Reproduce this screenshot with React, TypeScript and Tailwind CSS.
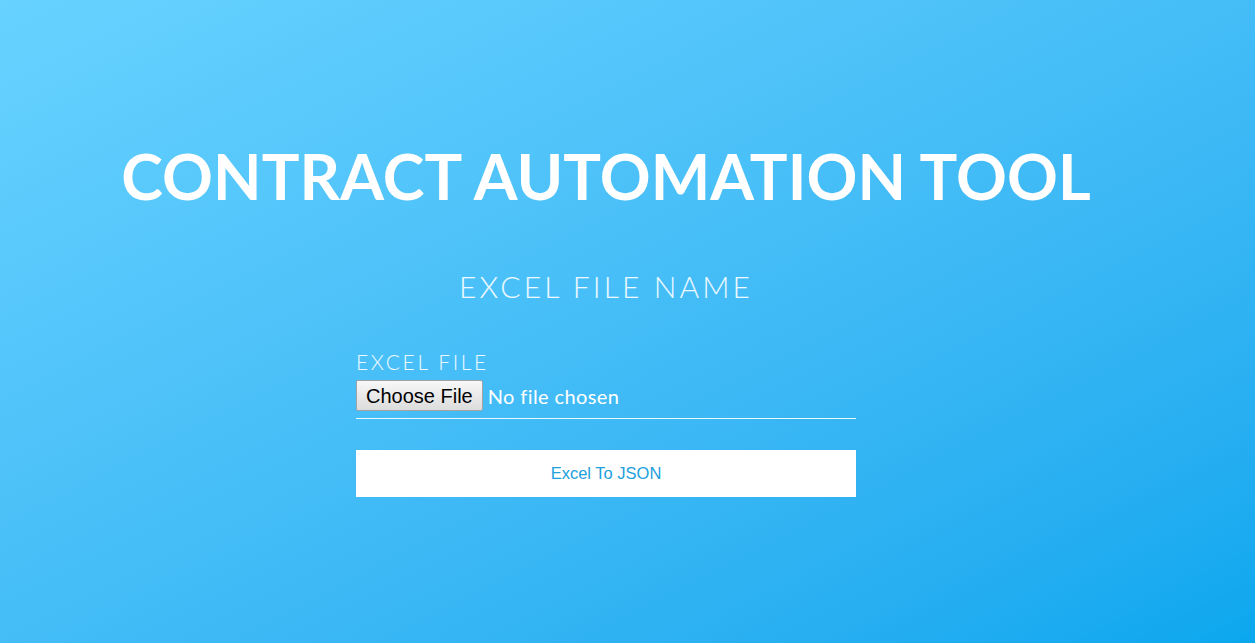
export default function App() {
  return (
    <div className="min-h-[643px] w-full bg-gradient-to-br from-[#67d2ff] to-[#09a7ee] font-['Lato','Noto_Sans',sans-serif] text-white">
      <div className="flex flex-col items-center pr-[43px]">
        <h1 className="mt-[138px] text-[63px] leading-[76px] font-bold tracking-[0.1px] text-white">
          CONTRACT AUTOMATION TOOL
        </h1>
        <h2 className="mt-[54px] text-[30px] leading-[36px] font-light tracking-[3.1px] text-white/90">
          EXCEL FILE NAME
        </h2>
        <form className="mt-[46px] flex w-[500px] flex-col">
          <label className="text-[21px] leading-[24px] font-light tracking-[2.6px] text-white/90">EXCEL FILE</label>
          <div className="mt-[6px] flex items-center border-b border-white/90 pb-[7px]">
            <span className="flex h-[31px] items-center rounded-[2px] border border-[#a3a3a3] bg-gradient-to-b from-[#f8f8f8] to-[#dcdcdc] px-[9px] font-['Liberation_Sans',Arial,sans-serif] text-[20px] text-black">
              Choose File
            </span>
            <span className="ml-[5px] text-[20px] tracking-[0.4px] text-white">No file chosen</span>
          </div>
          <button
            type="button"
            className="mt-[31px] h-[47px] w-full bg-white font-['Liberation_Sans',Arial,sans-serif] text-[16.5px] text-[#20a0dc]"
          >
            Excel To JSON
          </button>
        </form>
      </div>
    </div>
  );
}
